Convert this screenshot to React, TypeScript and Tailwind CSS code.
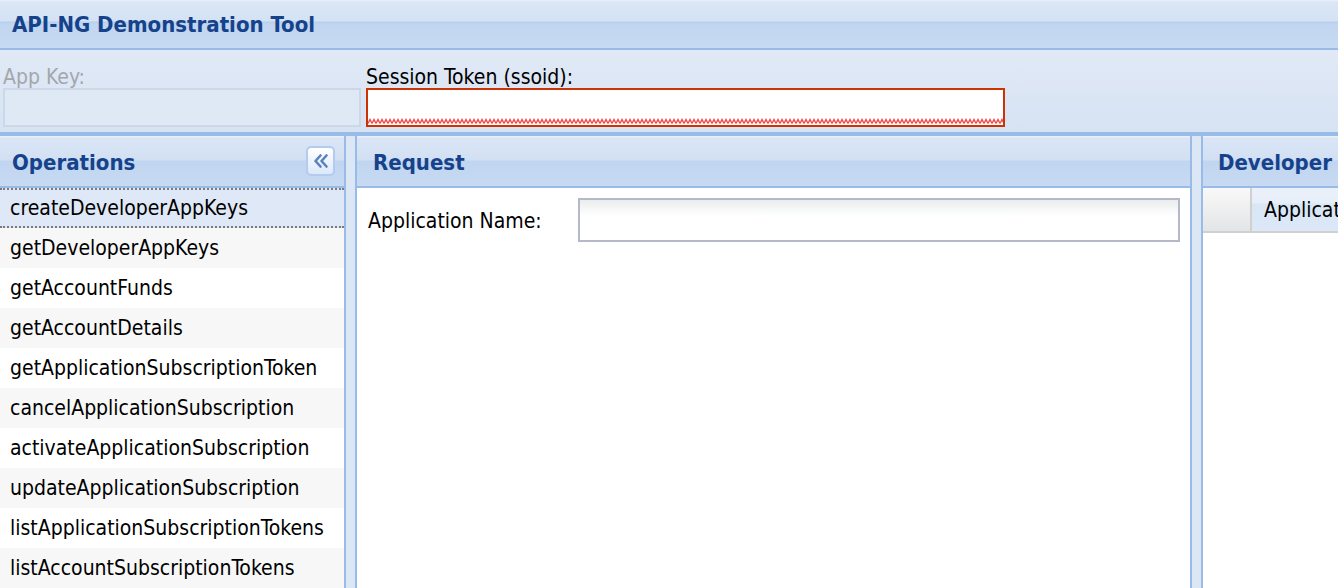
import React from "react";

const operations = [
  "createDeveloperAppKeys",
  "getDeveloperAppKeys",
  "getAccountFunds",
  "getAccountDetails",
  "getApplicationSubscriptionToken",
  "cancelApplicationSubscription",
  "activateApplicationSubscription",
  "updateApplicationSubscription",
  "listApplicationSubscriptionTokens",
  "listAccountSubscriptionTokens",
];

function PanelHeader({
  title,
  className = "",
  children,
}: {
  title: string;
  className?: string;
  children?: React.ReactNode;
}) {
  return (
    <div
      className={`h-[52px] shrink-0 flex items-center justify-between overflow-hidden border-b-2 border-[#99bbe8] bg-[linear-gradient(to_bottom,#eef4fb_0px,#dae6f6_2px,#d2e0f3_24px,#c0d5f0_25px,#c8daf2_100%)] ${className}`}
    >
      <span className="whitespace-nowrap pt-[3px] text-[22px] font-bold leading-[26px] text-[#15428b]">
        {title}
      </span>
      {children}
    </div>
  );
}

function CollapseButton() {
  return (
    <button className="flex h-[30px] w-[29px] items-center justify-center rounded-[5px] border-2 border-[#b3cbee] bg-[linear-gradient(to_bottom,#ffffff,#dce8f8)]">
      <svg width="18" height="16" viewBox="0 0 18 16" fill="none">
        <path
          d="M8.5 2.5 L3.5 8 L8.5 13.5 M14.5 2.5 L9.5 8 L14.5 13.5"
          stroke="#5b80c2"
          strokeWidth="2.6"
          strokeLinecap="round"
          strokeLinejoin="round"
        />
      </svg>
    </button>
  );
}

export default function App() {
  return (
    <div className="flex h-[588px] w-[1338px] flex-col overflow-hidden bg-[#99bbe8] font-['DejaVu_Sans_Condensed','DejaVu_Sans',sans-serif] text-black">
      {/* title bar */}
      <div className="flex h-[50px] shrink-0 items-center border-b-2 border-[#99bbe8] bg-[linear-gradient(to_bottom,#eaf1fa_0px,#dbe7f6_2px,#d4e2f4_21px,#b6cfee_22px,#c0d5f0_24px,#c7daf2_100%)] pl-[12px] pt-[2px]">
        <h1 className="whitespace-nowrap text-[22px] font-bold leading-[26px] text-[#15428b]">
          API-NG Demonstration Tool
        </h1>
      </div>

      {/* credentials toolbar */}
      <div className="flex h-[82px] shrink-0 gap-[5px] bg-[linear-gradient(to_bottom,#e1e9f6,#d6e3f3)] pl-[3px] pt-[14px]">
        <div className="flex w-[358px] flex-col">
          <label className="h-[24px] pt-[1px] text-[21px] leading-[24px] text-[#a3a7ad]">
            App Key:
          </label>
          <div className="h-[39px] border-2 border-[#ccd7e7] bg-[#dfe8f5]" />
        </div>
        <div className="flex w-[639px] flex-col">
          <label className="h-[24px] pt-[1px] text-[21px] leading-[24px]">
            Session Token (ssoid):
          </label>
          <div className="relative h-[39px] border-2 border-[#cc3300] bg-white">
            <svg
              className="absolute bottom-[1px] left-0 right-0"
              width="100%"
              height="6"
            >
              <defs>
                <pattern
                  id="zig"
                  width="4"
                  height="6"
                  patternUnits="userSpaceOnUse"
                >
                  <path
                    d="M0 5.5 L2 1.5 L4 5.5"
                    stroke="#f04848"
                    strokeWidth="1.4"
                    fill="none"
                  />
                </pattern>
              </defs>
              <rect width="100%" height="6" fill="url(#zig)" />
            </svg>
          </div>
        </div>
      </div>

      {/* layout border */}
      <div className="h-[4px] shrink-0" />

      {/* panels */}
      <div className="flex min-h-0 flex-1">
        {/* operations */}
        <div className="flex w-[346px] shrink-0 flex-col border-r-2 border-[#99bbe8] bg-white">
          <PanelHeader title="Operations" className="pl-[12px] pr-[9px]">
            <CollapseButton />
          </PanelHeader>
          <ul className="flex flex-col">
            {operations.map((op, i) => (
              <li
                key={op}
                className={
                  i === 0
                    ? "h-[40px] whitespace-nowrap border-y-2 border-dotted border-[#7a7a7a] bg-[#dfe8f6] pl-[10px] pt-[1px] text-[21px] leading-[35px]"
                    : i % 2 === 1
                      ? "h-[40px] whitespace-nowrap bg-[#f7f7f7] pl-[10px] pt-[1px] text-[21px] leading-[39px]"
                      : "h-[40px] whitespace-nowrap bg-white pl-[10px] pt-[1px] text-[21px] leading-[39px]"
                }
              >
                {op}
              </li>
            ))}
          </ul>
        </div>

        <div className="w-[9px] shrink-0 bg-[#dce7f5]" />

        {/* request */}
        <div className="flex w-[837px] shrink-0 flex-col border-x-2 border-[#99bbe8] bg-white">
          <PanelHeader title="Request" className="pl-[16px]" />
          <div className="flex items-center pl-[11px] pr-[10px] pt-[10px]">
            <label className="w-[210px] shrink-0 whitespace-nowrap pt-[3px] text-[21px]">
              Application Name:
            </label>
            <div className="h-[44px] flex-1 border-2 border-[#b5b8c8] bg-[linear-gradient(to_bottom,#eaeded_0px,#ffffff_16px)]" />
          </div>
        </div>

        <div className="w-[9px] shrink-0 bg-[#dce7f5]" />

        {/* developer apps */}
        <div className="flex min-w-0 flex-1 flex-col border-l-2 border-[#99bbe8] bg-white">
          <PanelHeader title="Developer Apps" className="pl-[15px]" />
          <div className="flex h-[45px] shrink-0 border-b-2 border-[#d0d0d0]">
            <div className="w-[49px] shrink-0 border-r-2 border-[#d0d0d0] bg-[linear-gradient(to_bottom,#f9f9f9,#e3e4e6)]" />
            <div className="flex flex-1 items-center overflow-hidden whitespace-nowrap bg-[linear-gradient(to_bottom,#ebf1fa_0px,#e6eef9_15px,#d9e6f6_16px,#dce8f7_100%)] pl-[12px] pt-[2px] text-[21px]">
              Application Name
            </div>
          </div>
        </div>
      </div>
    </div>
  );
}
